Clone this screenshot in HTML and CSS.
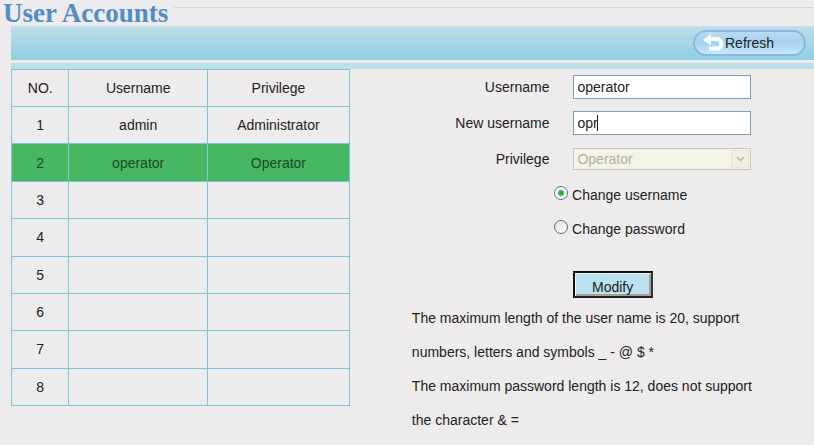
FILE: index.html
```html
<!DOCTYPE html>
<html lang="en">
<head>
    <meta charset="utf-8">
    <title>User Accounts</title>
    <link rel="stylesheet" href="styles.css">
</head>
<body>
    <header class="page-title">
        <h1>User Accounts</h1>
    </header>
    <div class="toolbar">
        <button type="button" class="refresh">
            <svg width="22" height="18" viewBox="0 0 22 18" aria-hidden="true">
                <path d="M7 5 H14 C20 5 20 14.5 14 14.5 H6" fill="none" stroke="#fff" stroke-width="4"/>
                <path d="M0 6 L8 0 V11 Z" fill="#fff"/>
            </svg>
            Refresh
        </button>
    </div>
    <main class="content">
        <table class="accounts">
            <thead>
                <tr>
                    <th class="col-no">NO.</th>
                    <th class="col-name">Username</th>
                    <th>Privilege</th>
                </tr>
            </thead>
            <tbody>
                <tr><td>1</td><td>admin</td><td>Administrator</td></tr>
                <tr class="selected"><td>2</td><td>operator</td><td>Operator</td></tr>
                <tr><td>3</td><td></td><td></td></tr>
                <tr><td>4</td><td></td><td></td></tr>
                <tr><td>5</td><td></td><td></td></tr>
                <tr><td>6</td><td></td><td></td></tr>
                <tr><td>7</td><td></td><td></td></tr>
                <tr><td>8</td><td></td><td></td></tr>
            </tbody>
        </table>
        <form class="edit">
            <div class="field">
                <label for="username">Username</label>
                <input type="text" id="username" value="operator">
            </div>
            <div class="field">
                <label for="new-username">New username</label>
                <div class="control">
                    <input type="text" id="new-username" value="opr">
                    <span class="caret"></span>
                </div>
            </div>
            <div class="field">
                <label for="privilege">Privilege</label>
                <div class="control">
                    <select id="privilege" disabled>
                        <option>Operator</option>
                    </select>
                    <span class="arrow">
                        <svg width="9" height="6" viewBox="0 0 9 6" aria-hidden="true">
                            <path d="M1 1 L4.5 4.5 L8 1" fill="none" stroke="#c3c2b2" stroke-width="2"/>
                        </svg>
                    </span>
                </div>
            </div>
            <div class="choices">
                <label><input type="radio" name="change" checked>Change username</label>
                <label><input type="radio" name="change">Change password</label>
            </div>
            <button type="submit" class="modify">Modify</button>
            <div class="notes">
                <p>The maximum length of the user name is 20, support numbers, letters and symbols _ - @ $ *</p>
                <p>The maximum password length is 12, does not support the character &amp; =</p>
            </div>
        </form>
    </main>
</body>
</html>
```

FILE: styles.css
```css
* {
    box-sizing: border-box;
}
body {
    margin: 0;
    background-color: #edebeb;
    color: #222;
    font-family: "Liberation Sans", Arial, sans-serif;
    font-size: 14px;
}
input,
select,
button {
    font: inherit;
    color: inherit;
}
.page-title {
    display: flex;
    height: 26px;
    padding-left: 3px;
}
.page-title h1 {
    margin: 0;
    color: #528dc9;
    font-family: "Liberation Serif", "Times New Roman", serif;
    font-size: 27px;
    line-height: 26px;
}
.page-title::after {
    content: "";
    flex: 1;
    height: 7px;
    margin-left: 6px;
    border-bottom: 1px solid #d9d6d5;
}
.toolbar {
    display: flex;
    justify-content: flex-end;
    align-items: center;
    height: 34px;
    margin-left: 11px;
    padding-right: 8px;
    background: linear-gradient(#bfdfe9, #8dcfe3);
}
.refresh {
    display: flex;
    align-items: center;
    width: 113px;
    height: 26px;
    padding: 0 8px;
    border: 2px solid #8eb5de;
    border-radius: 13px;
    background: linear-gradient(#b9dcf5, #a5d0f2 45%, #c5e9fb);
    cursor: pointer;
}
.content {
    display: flex;
    align-items: flex-start;
    margin: 3px 0 0 11px;
    border-top: 6px solid #bbe0ea;
}
.accounts {
    width: 42.2%;
    table-layout: fixed;
    height: 337px;
    border-collapse: collapse;
    text-align: center;
}
.accounts th,
.accounts td {
    height: 37px;
    padding: 0;
    border: 1px solid #7cc8d8;
    font-weight: normal;
}
.accounts .col-no {
    width: 17%;
}
.accounts .col-name {
    width: 41%;
}
.accounts .selected {
    background-color: #47b763;
    color: #174d25;
}
.edit {
    flex: 1;
    padding-top: 6px;
}
.field {
    display: grid;
    grid-template-columns: 43% 178px;
    column-gap: 24px;
    align-items: center;
    height: 24px;
}
.field + .field {
    margin-top: 12px;
}
.field > label {
    text-align: right;
}
.field input,
.field select {
    display: block;
    width: 100%;
    height: 24px;
    padding: 0 3px;
    border: 1px solid #7f9db9;
    border-radius: 0;
    background-color: #fff;
}
.control {
    position: relative;
}
.caret {
    position: absolute;
    top: 4px;
    left: 24px;
    width: 1px;
    height: 16px;
    background-color: #222;
}
.field select {
    height: 22px;
    appearance: none;
    border-color: #cac8bb;
    background-color: #f4f3e8;
    color: #b3b1a2;
    opacity: 1;
}
.arrow {
    position: absolute;
    top: 2px;
    right: 2px;
    display: flex;
    align-items: center;
    justify-content: center;
    width: 18px;
    height: 18px;
    border: 1px solid #e6e4d8;
    background-color: #f1efe4;
    pointer-events: none;
}
.choices {
    display: flex;
    flex-direction: column;
    align-items: flex-start;
    margin: 7px 0 0 44%;
}
.choices label {
    display: flex;
    align-items: center;
    gap: 4px;
    height: 34px;
}
.choices input {
    appearance: none;
    width: 14px;
    height: 14px;
    margin: 0 0 4px;
    border: 1px solid #4f6f91;
    border-radius: 50%;
    background: linear-gradient(135deg, #e2e2dd, #fff);
}
.choices input:checked {
    background: radial-gradient(circle, #35a835 2px, #fff 4px);
}
.modify {
    display: block;
    width: 80px;
    height: 27px;
    margin: 25px 0 3px 48%;
    padding: 5px 0 0;
    border: 2px solid;
    border-color: #111 #333 #222 #111;
    background-color: #b9e1ef;
    box-shadow: inset 1px 1px #f4f4ee, inset -2px -2px #a5a294;
    cursor: pointer;
}
.notes {
    max-width: 412px;
    padding-left: 62px;
    line-height: 34px;
}
.notes p {
    margin: 0;
}
```
